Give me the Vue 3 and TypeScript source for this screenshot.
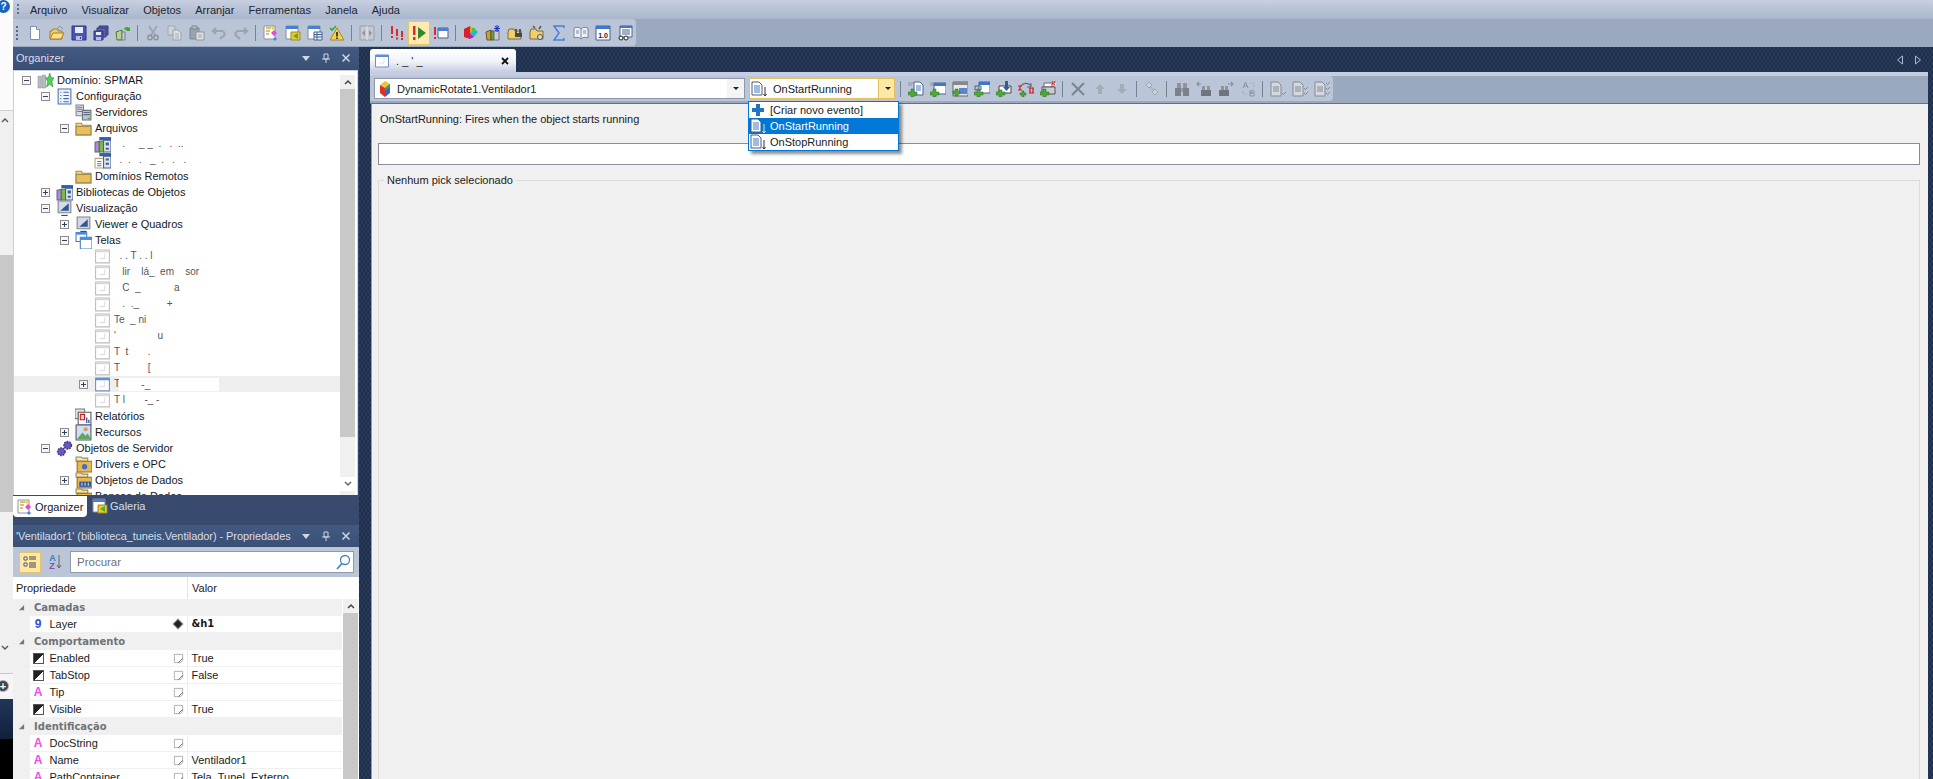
<script setup lang="ts">
interface TreeRow { label: string; level: number; icon: string; exp?: 'plus' | 'minus'; cls?: string; patch?: string }

const menus: string[] = ['Arquivo', 'Visualizar', 'Objetos', 'Arranjar', 'Ferramentas', 'Janela', 'Ajuda']

const tools1: string[] = ['new', 'open', 'save', 'saveall', 'refresh', '|', 'cut', 'copy', 'paste', 'undo', 'redo', '|',
  'organizer', 'gallery', 'propwin', 'warn', '|', 'compare', '|', 'excl3', 'run', 'exclwin', '|',
  'colors', 'libspark', 'folderbino', 'foldergear', 'sigma', 'book', 'val', 'report']

const tools2: string[] = ['|', 'adddoc', 'addwin', 'addimg', 'addwin2', 'adddown', 'addcycle', 'addprint', '|',
  'xgray', 'upgray', 'downgray', '|', 'diamonds', '|', 'bino', 'binoleft', 'binoright', 'replace', '|',
  'check1', 'check2', 'check3']

const tree: TreeRow[] = [
  { label: 'Domínio: SPMAR', level: 0, icon: 'domain', exp: 'minus' },
  { label: 'Configuração', level: 1, icon: 'list', exp: 'minus' },
  { label: 'Servidores', level: 2, icon: 'servers' },
  { label: 'Arquivos', level: 2, icon: 'folder', exp: 'minus' },
  { label: '   .     _ _  .   .  ..', level: 3, icon: 'lib', cls: 'mask' },
  { label: '  .  .   .   _  .   .   .', level: 3, icon: 'filetable', cls: 'mask' },
  { label: 'Domínios Remotos', level: 2, icon: 'folder' },
  { label: 'Bibliotecas de Objetos', level: 1, icon: 'lib', exp: 'plus' },
  { label: 'Visualização', level: 1, icon: 'monitor', exp: 'minus' },
  { label: 'Viewer e Quadros', level: 2, icon: 'monitor', exp: 'plus' },
  { label: 'Telas', level: 2, icon: 'windows', exp: 'minus' },
  { label: '  . . T . . l', level: 3, icon: 'wingray', cls: 'mask' },
  { label: '   lir    lá_  em    sor', level: 3, icon: 'wingray', cls: 'mask' },
  { label: '   C  _            a', level: 3, icon: 'wingray', cls: 'mask' },
  { label: '   .  ._          +', level: 3, icon: 'wingray', cls: 'mask' },
  { label: 'Te  _ ni', level: 3, icon: 'wingray', cls: 'mask' },
  { label: "'               u", level: 3, icon: 'wingray', cls: 'mask' },
  { label: 'T  t       .', level: 3, icon: 'wingray', cls: 'mask' },
  { label: 'T          [', level: 3, icon: 'wingray', cls: 'mask' },
  { label: 'T', level: 3, icon: 'winblue', exp: 'plus', cls: 'hover mask', patch: '        -_' },
  { label: 'T l       -_ -', level: 3, icon: 'wingray', cls: 'mask' },
  { label: 'Relatórios', level: 2, icon: 'reportdoc' },
  { label: 'Recursos', level: 2, icon: 'picture', exp: 'plus' },
  { label: 'Objetos de Servidor', level: 1, icon: 'gears', exp: 'minus' },
  { label: 'Drivers e OPC', level: 2, icon: 'folderblue' },
  { label: 'Objetos de Dados', level: 2, icon: 'folderdata', exp: 'plus' },
  { label: 'Bancos de Dados', level: 2, icon: 'folderblue' }
]

interface PropRow { group?: string; name?: string; kind?: 'nine' | 'bool' | 'text'; value?: string; strong?: boolean }
const props: PropRow[] = [
  { group: 'Camadas' },
  { name: 'Layer', kind: 'nine', value: '&h1', strong: true },
  { group: 'Comportamento' },
  { name: 'Enabled', kind: 'bool', value: 'True' },
  { name: 'TabStop', kind: 'bool', value: 'False' },
  { name: 'Tip', kind: 'text', value: '' },
  { name: 'Visible', kind: 'bool', value: 'True' },
  { group: 'Identificação' },
  { name: 'DocString', kind: 'text', value: '' },
  { name: 'Name', kind: 'text', value: 'Ventilador1' },
  { name: 'PathContainer', kind: 'text', value: 'Tela_Tunel_Externo' }
]
</script>

<template>
  <div class="app">
    <svg class="sprite" aria-hidden="true">
      <defs>
        <symbol id="new" viewBox="0 0 16 16"><path d="M3.500 1.500h6l3 3v10h-9z" fill="#fff" stroke="#7d8fb0"/><path d="M9.500 1.500v3h3" fill="#dfe6f2" stroke="#7d8fb0"/></symbol>
        <symbol id="open" viewBox="0 0 16 16"><path d="M1 6h2l1-2h5v2h4v8H1z" fill="#f0cd6e" stroke="#a67c2a"/><path d="M1 14l3-6h11l-3 6z" fill="#ffe08a" stroke="#a67c2a"/><path d="M9 3c1-2 3-2 4 0l1 1" fill="none" stroke="#7f8aa0"/></symbol>
        <symbol id="save" viewBox="0 0 16 16"><path d="M1 1h14v14H1z" fill="#4a55b5" stroke="#2e3680"/><path d="M4 2h8v6H4z" fill="#e8ecf8"/><path d="M5 11h6v4H5z" fill="#b8bfd8"/><path d="M9 12h1v2H9z" fill="#2e3680"/></symbol>
        <symbol id="saveall" viewBox="0 0 16 16"><path d="M6 1h9v9H6z" fill="#5b62a8" stroke="#33397a"/><path d="M4 3h9v9H4z" fill="#5b62a8" stroke="#33397a"/><path d="M1 6h9v9H1z" fill="#4a55b5" stroke="#2e3680"/><path d="M3 7h5v3H3z" fill="#e8ecf8"/><path d="M3 12h5v3H3z" fill="#b8bfd8"/></symbol>
        <symbol id="refresh" viewBox="0 0 16 16"><path d="M1 7l6-2v10H2z" fill="#8fb35a" stroke="#5c7a37"/><path d="M3 7v7M5 6v8" stroke="#e3edd0"/><path d="M7 7h3v8H7z" fill="#c8ccd4" stroke="#7b8090"/><path d="M9 4a3 3 0 0 1 5-1l1-1v4h-4l1-1a2 2 0 0 0-2 0z" fill="#3fa535"/></symbol>
        <symbol id="cut" viewBox="0 0 16 16"><path d="M4 1l6 9M12 1l-6 9" stroke="#9aa2ae" stroke-width="1.600" fill="none"/><circle cx="5" cy="12.500" r="2.200" fill="none" stroke="#8b929e" stroke-width="1.400"/><circle cx="11" cy="12.500" r="2.200" fill="none" stroke="#8b929e" stroke-width="1.400"/></symbol>
        <symbol id="copy" viewBox="0 0 16 16"><path d="M1 1h7v9H1z" fill="#d0d4da" stroke="#a0a6b0"/><path d="M6 5h5l3 3v7H6z" fill="#dde0e5" stroke="#98a0aa"/><path d="M8 9h4M8 11h4M8 13h4" stroke="#a8aeb8"/></symbol>
        <symbol id="paste" viewBox="0 0 16 16"><path d="M1 3h9v11H1z" fill="#9da3ac" stroke="#7e848e"/><path d="M3 1h5v3H3z" fill="#bcc1c8" stroke="#7e848e"/><path d="M7 7h8v8H7z" fill="#dfe2e6" stroke="#8d939c"/><path d="M9 10h4M9 12h4" stroke="#a0a6ae"/></symbol>
        <symbol id="undo" viewBox="0 0 16 16"><path d="M5 3L2 6l3 3M3 6h7a3 3 0 0 1 1 6l-2 2" fill="none" stroke="#9ca4b0" stroke-width="2.200"/></symbol>
        <symbol id="redo" viewBox="0 0 16 16"><path d="M11 3l3 3-3 3M13 6H6a3 3 0 0 0-1 6l2 2" fill="none" stroke="#9ca4b0" stroke-width="2.200"/></symbol>
        <symbol id="organizer" viewBox="0 0 16 16"><path d="M1 1h11v13H1z" fill="#fff" stroke="#8a93a6"/><path d="M3 3h5M3 6h4M3 9h3" stroke="#d8a93a" stroke-width="1.500"/><path d="M11 5l3 3-3 3-3-3z" fill="#e24ad8"/><path d="M12 12l2 2-2 2-2-2z" fill="#4b86e0"/><path d="M10 1l2 2-2 2-2-2z" fill="#f0d040"/></symbol>
        <symbol id="gallery" viewBox="0 0 16 16"><path d="M1 1h12v13H1z" fill="#fff" stroke="#7f8ba0"/><path d="M1 1h12v3H1z" fill="#4d7fd0"/><path d="M6 7h9v8H6z" fill="#e8c93a" stroke="#a08a20"/><path d="M13 8l-5 3 5 3z" fill="#55b02e"/></symbol>
        <symbol id="propwin" viewBox="0 0 16 16"><path d="M1 1h12v13H1z" fill="#fff" stroke="#7f8ba0"/><path d="M1 1h12v3H1z" fill="#4d7fd0"/><path d="M7 7h8v8H7z" fill="#eef1f8" stroke="#44618f"/><path d="M7 9.500h8M7 12h8M10 7v8" stroke="#44618f"/></symbol>
        <symbol id="warn" viewBox="0 0 16 16"><path d="M8 3l7 12H1z" fill="#f6d24a" stroke="#a6862a"/><path d="M7.200 7h1.600v4.500H7.200zM7.200 12.500h1.600V14H7.200z" fill="#222"/><path d="M1 3l2 2 4-4" fill="none" stroke="#3aa53a" stroke-width="1.600"/></symbol>
        <symbol id="compare" viewBox="0 0 16 16"><path d="M1 1h14v14H1z" fill="#c5c9d0" stroke="#9a9fa8"/><path d="M8 1v14" stroke="#e8eaee"/><path d="M3 8l3-3v6zM13 8l-3-3v6z" fill="#8f949c"/></symbol>
        <symbol id="excl3" viewBox="0 0 16 16"><path d="M2 1h2v8H2zM2 11h2v2H2zM7 4h2v7H7zM7 12.500h2v2H7zM12 6h2v6h-2zM12 13h2v2h-2z" fill="#dd2a2a"/></symbol>
        <symbol id="run" viewBox="0 0 16 16"><path d="M2 1h2.500v9H2zM2 12h2.500v3H2z" fill="#dd2a2a"/><path d="M7 2l8 6-8 6z" fill="#2f8a2f"/></symbol>
        <symbol id="exclwin" viewBox="0 0 16 16"><path d="M1 2h2v8H1zM1 12h2v2H1z" fill="#dd2a2a"/><path d="M5 3h10v10H5z" fill="#fff" stroke="#44618f"/><path d="M5 3h10v3H5z" fill="#4d7fd0"/></symbol>
        <symbol id="colors" viewBox="0 0 16 16"><path d="M1 4l6-3v13l-6-2z" fill="#d81f2a"/><path d="M7 1l5 3-5 4z" fill="#f0a020"/><path d="M7 8l5-4 3 3-4 5z" fill="#1fc0c0"/><path d="M7 8l4 4-4 2z" fill="#c020c0"/><path d="M9 3h3v3H9z" fill="#50c040"/></symbol>
        <symbol id="libspark" viewBox="0 0 16 16"><path d="M1 7l5-2v10H2z" fill="#c8a03a" stroke="#6a5520"/><path d="M6 6h3v9H6z" fill="#70a040" stroke="#43602a"/><path d="M9 6h5v9H9z" fill="#c9cdd4" stroke="#6f7482"/><path d="M12 0v7M9 3.500h6M10 1l4 5M14 1l-4 5" stroke="#1c2fd0"/></symbol>
        <symbol id="folderbino" viewBox="0 0 16 16"><path d="M1 7l1-3h5l1 2h6v8H1z" fill="#f0cd6e" stroke="#7f6a30"/><path d="M8 4h2v5H8zM12 4h2v5h-2z" fill="#555"/><path d="M8 8h3v4H8zM11 8h4v4h-4z" fill="#44484f"/></symbol>
        <symbol id="foldergear" viewBox="0 0 16 16"><path d="M1 7l1-3h5l1 2h6v8H1z" fill="#f0cd6e" stroke="#7f6a30"/><circle cx="11" cy="12" r="2.500" fill="#ddd" stroke="#555"/><path d="M4 1l2 2M12 1l-2 3" stroke="#555" stroke-width="1.400"/></symbol>
        <symbol id="sigma" viewBox="0 0 16 16"><path d="M13 3V1H3l5 7-5 7h10v-2" fill="none" stroke="#4a7fdc" stroke-width="1.500"/></symbol>
        <symbol id="book" viewBox="0 0 16 16"><path d="M1 3c3-1 5-1 7 1 2-2 4-2 7-1v10c-3-1-5-1-7 1-2-2-4-2-7-1z" fill="#eef0f4" stroke="#7e8490"/><path d="M8 4v10" stroke="#7e8490"/><path d="M3 6h3M3 8h3M10 6h3M10 8h3" stroke="#5f8fd0"/></symbol>
        <symbol id="val" viewBox="0 0 16 16"><path d="M1 1h14v14H1z" fill="#fff" stroke="#46608c"/><path d="M1 1h14v3H1z" fill="#3f77cf"/><text x="8" y="13" font-size="7" font-weight="700" text-anchor="middle" fill="#223" font-family="Liberation Sans">1.0</text></symbol>
        <symbol id="report" viewBox="0 0 16 16"><path d="M3 1h12v11H3z" fill="#fff" stroke="#46608c"/><path d="M3 1h12v2H3z" fill="#3f77cf"/><path d="M5 5h8M5 7h8M5 9h8" stroke="#46608c"/><circle cx="4" cy="13" r="2" fill="#fff" stroke="#222"/><circle cx="9" cy="13" r="2" fill="#fff" stroke="#222"/></symbol>

        <symbol id="adddoc" viewBox="0 0 16 16"><path d="M0 2h5M0 4h4" stroke="#8a93a6"/><path d="M6 1h6l3 3v10H6z" fill="#fff" stroke="#46608c"/><path d="M8 5h5M8 7h5M8 9h5" stroke="#3f77cf"/><path d="M3 8h3v3h3v3H6v2H3v-2H0v-3h3z" fill="#4fa83d" stroke="#2d6b23" stroke-width=".5"/></symbol>
        <symbol id="addwin" viewBox="0 0 16 16"><path d="M0 2h5M0 4h4" stroke="#8a93a6"/><path d="M4 2h12v11H4z" fill="#fff" stroke="#46608c"/><path d="M4 2h12v3H4z" fill="#3f77cf"/><path d="M3 8h3v3h3v3H6v2H3v-2H0v-3h3z" fill="#4fa83d" stroke="#2d6b23" stroke-width=".5"/></symbol>
        <symbol id="addimg" viewBox="0 0 16 16"><path d="M1 1h15v14H1z" fill="#e8e8e8" stroke="#666"/><path d="M1 1h15v3H1z" fill="#888"/><path d="M7 7h8v6H7z" fill="#5a86d0"/><path d="M3 8h3v2h2v3H6v2H3v-2H1v-3h2z" fill="#4fa83d" stroke="#2d6b23" stroke-width=".5"/></symbol>
        <symbol id="addwin2" viewBox="0 0 16 16"><path d="M5 1h11v11H5z" fill="#fff" stroke="#46608c"/><path d="M5 1h11v3H5z" fill="#3f77cf"/><path d="M1 5h6v4H1z" fill="none" stroke="#46608c"/><path d="M3 8h3v3h3v3H6v2H3v-2H0v-3h3z" fill="#4fa83d" stroke="#2d6b23" stroke-width=".5"/></symbol>
        <symbol id="adddown" viewBox="0 0 16 16"><path d="M3 5h12v7H3z" fill="#fff" stroke="#444"/><path d="M9 0h3v6h2l-3.500 4L7 6h2z" fill="#2a5f9e"/><path d="M3 9h3v2h3v3H6v2H3v-2H0v-3h3z" fill="#4fa83d" stroke="#2d6b23" stroke-width=".5"/></symbol>
        <symbol id="addcycle" viewBox="0 0 16 16"><path d="M3 5a6 6 0 0 1 10 0" fill="none" stroke="#666" stroke-width="1.300"/><path d="M13 2v4h-4" fill="none" stroke="#666"/><path d="M0 5h4M2 5v4M0 9h4M11 7h5M12 7v5M15 7v5M11 12h5" stroke="#c81818" stroke-width="1.200"/><path d="M4 10h2v2h2v2H6v2H4v-2H2v-2h2z" fill="#4fa83d" stroke="#2d6b23" stroke-width=".5"/></symbol>
        <symbol id="addprint" viewBox="0 0 16 16"><path d="M4 2h8v4H4z" fill="#fff" stroke="#666"/><path d="M2 6h13v7H2z" fill="#c8ccd4" stroke="#555"/><path d="M11 0h5v4h-5z" fill="#fff"/><path d="M12 0v4M12 0h3v2h-3l3 2" stroke="#c81818" fill="none"/><path d="M3 8h3v3h3v3H6v2H3v-2H0v-3h3z" fill="#4fa83d" stroke="#2d6b23" stroke-width=".5"/></symbol>
        <symbol id="xgray" viewBox="0 0 16 16"><path d="M2 2l12 12M14 2L2 14" stroke="#7c8290" stroke-width="2"/></symbol>
        <symbol id="upgray" viewBox="0 0 16 16"><path d="M8 3l5 5h-3v5H6V8H3z" fill="#a6acb6"/></symbol>
        <symbol id="downgray" viewBox="0 0 16 16"><path d="M8 13L3 8h3V3h4v5h3z" fill="#a6acb6"/></symbol>
        <symbol id="diamonds" viewBox="0 0 16 16"><path d="M5 1l3 3-3 3-3-3zM11 8l3 3-3 3-3-3z" fill="#cdd2da" stroke="#a0a6b0"/><path d="M6 6l4 3" stroke="#a0a6b0"/></symbol>
        <symbol id="bino" viewBox="0 0 16 16"><path d="M3 2h4v5H3zM9 2h4v5H9z" fill="#8f959f"/><path d="M1 7h6v8H1zM9 7h6v8H9z" fill="#7c828c"/><path d="M7 7h2v4H7z" fill="#9aa0aa"/></symbol>
        <symbol id="binoleft" viewBox="0 0 16 16"><path d="M5 3H1M3 1L1 3l2 2" fill="none" stroke="#8a909a" stroke-width="1.200"/><path d="M6 5h3v4H6zM11 5h3v4h-3z" fill="#8f959f"/><path d="M5 9h5v6H5zM10 9h5v6h-5z" fill="#6f7580"/></symbol>
        <symbol id="binoright" viewBox="0 0 16 16"><path d="M10 3h5M13 1l2 2-2 2" fill="none" stroke="#8a909a" stroke-width="1.200"/><path d="M3 5h3v4H3zM7 5h3v4H7z" fill="#8f959f"/><path d="M1 9h5v6H1zM6 9h5v6H6z" fill="#6f7580"/></symbol>
        <symbol id="replace" viewBox="0 0 16 16"><path d="M3 7l2.500-6L8 7M4 5h3M10 9v6h3a1.500 1.500 0 0 0 0-3h-3m0 0h2.500a1.500 1.500 0 0 0 0-3z" fill="none" stroke="#8a909a"/><path d="M10 2h4v4M3 10v3h4" fill="none" stroke="#a6acb6" stroke-dasharray="2 1"/></symbol>
        <symbol id="check1" viewBox="0 0 16 16"><path d="M1 1h7l3 3v11H1z" fill="#d5d8de" stroke="#858b96"/><path d="M3 6h6M3 8h6M3 10h6" stroke="#858b96"/><path d="M12 12l1.500 1.500L16 11" fill="none" stroke="#858b96"/></symbol>
        <symbol id="check2" viewBox="0 0 16 16"><path d="M1 1h7l3 3v11H1z" fill="#d5d8de" stroke="#858b96"/><path d="M3 6h6M3 8h6M3 10h6" stroke="#858b96"/><path d="M12 7l1.500 1.500L16 6M12 12l1.500 1.500L16 11" fill="none" stroke="#858b96"/></symbol>
        <symbol id="check3" viewBox="0 0 16 16"><path d="M1 1h7l3 3v11H1z" fill="#d5d8de" stroke="#858b96"/><path d="M3 6h6M3 8h6M3 10h6" stroke="#858b96"/><path d="M12 2l1.500 1.500L16 1M12 7l1.500 1.500L16 6M12 12l1.500 1.500L16 11" fill="none" stroke="#858b96"/></symbol>

        <symbol id="domain" viewBox="0 0 16 16"><path d="M1 4h3v11H1zM5 3h3v12H5z" fill="#b9bcc2" stroke="#8c9098" stroke-width=".6"/><path d="M12 1l1.500 4.500H16L14 9l1 5-3-2.500L9 14l1-5-2-3.500h2.500z" fill="#52d05a" stroke="#2f9a38" stroke-width=".6"/></symbol>
        <symbol id="list" viewBox="0 0 16 16"><path d="M2 1h12v14H2z" fill="#eef3fb" stroke="#4b6fb0"/><path d="M4 4h1M4 7h1M4 10h1M4 13h1M7 4h5M7 7h5M7 10h5M7 13h5" stroke="#3f68b8"/></symbol>
        <symbol id="servers" viewBox="0 0 16 16"><path d="M1 1h7v10H1z" fill="#d9dde3" stroke="#7f8692"/><path d="M2 3h5M2 5h5M2 7h5" stroke="#6f7c90"/><path d="M7 6h8v9H7z" fill="#c0c5cd" stroke="#6a717c"/><path d="M8 8h6M8 10h6" stroke="#5f6a7a"/><path d="M12 13h2v1h-2z" fill="#3fa535"/></symbol>
        <symbol id="folder" viewBox="0 0 16 16"><path d="M1 3h5l1 2h8v9H1z" fill="#f4d88a" stroke="#a58a4a"/><path d="M1 6h14v8H1z" fill="#e9be5d" stroke="#a58a4a"/></symbol>
        <symbol id="lib" viewBox="0 0 16 16"><path d="M5 1h11v3H5z" fill="#2f5fb0"/><path d="M1 6l4-1v10H1z" fill="#a88fd0" stroke="#6a5a90"/><path d="M5 5h4v10H5z" fill="#7fb84a" stroke="#4d7a2a"/><path d="M9 4h7v11H9z" fill="#dfe5f0" stroke="#41608f"/><path d="M11 6h3v3h-3zM11 11h3v2h-3z" fill="#41608f"/></symbol>
        <symbol id="filetable" viewBox="0 0 16 16"><path d="M5 1h11v3H5z" fill="#2f5fb0"/><path d="M1 6h8v9H1z" fill="#fff" stroke="#b9a67a"/><path d="M3 9h4M3 11h4M3 13h4" stroke="#4b78c8"/><path d="M9 4h7v11H9z" fill="#dfe5f0" stroke="#41608f"/><path d="M11 6h3v2h-3zM11 10h3v2h-3z" fill="#41608f"/></symbol>
        <symbol id="monitor" viewBox="0 0 16 16"><path d="M2 1h12v11H2z" fill="#d4d8de" stroke="#7e848e"/><path d="M4 3h8v7H4z" fill="#cfdcf0"/><path d="M4 10l8-7v7z" fill="#34558f"/><path d="M5 14h6v1H5z" fill="#3d3d3d"/></symbol>
        <symbol id="windows" viewBox="0 0 16 16"><path d="M1 0h10v9H1z" fill="#fff" stroke="#4c78c0"/><path d="M1 0h10v2.500H1z" fill="#4c88e0"/><path d="M5 5h11v11H5z" fill="#fff" stroke="#4c78c0"/><path d="M5 5h11v2.500H5z" fill="#4c88e0"/></symbol>
        <symbol id="wingray" viewBox="0 0 16 16"><path d="M1.500 2h13v12h-13z" fill="#fff" stroke="#bdbdbd"/><path d="M1.500 2h13v2h-13z" fill="#d8d8d8"/><path d="M10 5v5H5" fill="none" stroke="#e2e2e2"/></symbol>
        <symbol id="winblue" viewBox="0 0 16 16"><path d="M1.500 2h13v12h-13z" fill="#fff" stroke="#6b8fc8"/><path d="M1.500 2h13v2h-13z" fill="#5a8fe0"/><path d="M10 5v5H5" fill="none" stroke="#e2e2e2"/></symbol>
        <symbol id="reportdoc" viewBox="0 0 16 16"><path d="M0 1h9v9H0z" fill="#e2e4e8" stroke="#777"/><path d="M3 4h12v12H3z" fill="#fff" stroke="#555"/><path d="M5 6h4v5H5z" fill="#f4d0d0" stroke="#c81818"/><path d="M11 9v5M13 11v3" stroke="#3f68b8" stroke-width="1.400"/></symbol>
        <symbol id="picture" viewBox="0 0 16 16"><path d="M1 1h14v14H1z" fill="#cfe0f5" stroke="#555"/><path d="M2 14l5-6 3 3 2-2 3 5z" fill="#5da85a"/><circle cx="10" cy="5" r="2" fill="#d89a70"/></symbol>
        <symbol id="gears" viewBox="0 0 16 16"><circle cx="11" cy="5" r="3.500" fill="#6a5ab8" stroke="#463a8a" stroke-width="1.500" stroke-dasharray="1.500 1"/><circle cx="5" cy="11" r="3.500" fill="#6a5ab8" stroke="#463a8a" stroke-width="1.500" stroke-dasharray="1.500 1"/></symbol>
        <symbol id="folderblue" viewBox="0 0 16 16"><path d="M1 1h5l1 1h5v3H1z" fill="#f4e4b0" stroke="#9a8a50"/><path d="M2 5h14v10H2z" fill="#e8b94a" stroke="#8a6e2a"/><circle cx="9" cy="10" r="2.500" fill="#3a6ed8"/></symbol>
        <symbol id="folderdata" viewBox="0 0 16 16"><path d="M1 1h5l1 1h5v3H1z" fill="#f4e4b0" stroke="#9a8a50"/><path d="M2 5h14v10H2z" fill="#e8b94a" stroke="#8a6e2a"/><path d="M4 9h11v5H4z" fill="#2a58b8"/><path d="M6 10h1v3H6zM9 10h1v3H9zM12 10h1v3h-1z" fill="#ffe070"/></symbol>

        <symbol id="evt" viewBox="0 0 16 16"><path d="M1 1h7l3 3v10H1z" fill="#fff" stroke="#49597a"/><path d="M3 5h6M3 7h6M3 9h6M3 11h6" stroke="#3f78c8"/><path d="M14 6v9M12.500 13l1.500 2 1.500-2" fill="none" stroke="#333"/></symbol>
        <symbol id="evt2" viewBox="0 0 16 16"><path d="M1 1h7l3 3v10H1z" fill="#fff" stroke="#49597a"/><path d="M3 5h6M3 7h6M3 9h6M3 11h6" stroke="#3f78c8"/><path d="M14 6v9M12.500 13l1.500 2 1.500-2" fill="none" stroke="#ddd"/></symbol>
        <symbol id="cube" viewBox="0 0 16 16"><path d="M8 0l5 3-5 4-5-3z" fill="#f2c232"/><path d="M3 4l5 3v9L3 12z" fill="#d6332a"/><path d="M13 3v9l-5 4V7z" fill="#3a62c8"/><path d="M8 7l5-4v3l-5 4z" fill="#2ea84a"/></symbol>
        <symbol id="mark" viewBox="0 0 16 16"><path d="M2 2h12v9l-3 3H2z" fill="#fff" stroke="#909090"/><path d="M14 8l-6 6" stroke="#555" stroke-width="1.300"/></symbol>
      </defs>
    </svg>

    <aside class="strip">
      <div class="s-top"><span class="help">?</span></div>
      <div class="s-a"><svg class="chev" viewBox="0 0 8 6"><path d="M1 5l3-3 3 3" fill="none" stroke="#555" stroke-width="1.400"/></svg></div>
      <div class="s-b"></div>
      <div class="s-c"><svg class="chev" viewBox="0 0 8 6"><path d="M1 1l3 3 3-3" fill="none" stroke="#555" stroke-width="1.400"/></svg></div>
      <div class="s-d"><span class="plus-c">+</span></div>
      <div class="s-e"></div>
      <div class="s-f"></div>
    </aside>

    <div class="main">
      <nav class="menubar">
        <i class="grip"></i>
        <span v-for="m in menus" :key="m" class="menu">{{ m }}</span>
      </nav>

      <div class="band">
        <div class="toolbar top">
          <i class="grip2"></i>
          <template v-for="(t, i) in tools1" :key="i">
            <i v-if="t === '|'" class="sep"></i>
            <span v-else class="tb" :class="{ on: t === 'run' }"><svg class="ic"><use :href="'#' + t" /></svg></span>
          </template>
        </div>
      </div>

      <div class="work">
        <section class="dock">
          <header class="title">
            <span>Organizer</span>
            <span class="title-btns">
              <svg viewBox="0 0 10 10"><path d="M1 3h8L5 8z" fill="#cfd6e4"/></svg>
              <svg viewBox="0 0 10 10"><path d="M3 1h4v5H3zM1 6h8M5 6v4" fill="none" stroke="#cfd6e4"/></svg>
              <svg viewBox="0 0 10 10"><path d="M1.500 1.500l7 7M8.500 1.500l-7 7" stroke="#cfd6e4" stroke-width="1.500"/></svg>
            </span>
          </header>
          <div class="tree-panel">
            <div class="tree">
              <div v-for="(r, i) in tree" :key="i" class="row" :class="r.cls" :style="{ paddingLeft: 3 + r.level * 19 + 'px' }">
                <span class="exp-slot"><i v-if="r.exp" class="exp" :class="r.exp"></i></span>
                <svg class="tree-ic"><use :href="'#' + r.icon" /></svg>
                <span class="lbl">{{ r.label }}</span>
                <span v-if="r.patch" class="patch">{{ r.patch }}</span>
              </div>
            </div>
            <div class="vscroll">
              <span class="sb-btn"><svg viewBox="0 0 8 6"><path d="M1 5l3-3 3 3" fill="none" stroke="#444" stroke-width="1.500"/></svg></span>
              <span class="sb-thumb"></span>
              <span class="sb-btn low"><svg viewBox="0 0 8 6"><path d="M1 1l3 3 3-3" fill="none" stroke="#666" stroke-width="1.500"/></svg></span>
            </div>
          </div>
          <div class="dock-tabs">
            <span class="dtab active"><svg class="ic"><use href="#organizer" /></svg>Organizer</span>
            <span class="dtab"><svg class="ic"><use href="#gallery" /></svg>Galeria</span>
          </div>

          <header class="title second">
            <span class="tight">'Ventilador1' (biblioteca_tuneis.Ventilador) - Propriedades</span>
            <span class="title-btns">
              <svg viewBox="0 0 10 10"><path d="M1 3h8L5 8z" fill="#cfd6e4"/></svg>
              <svg viewBox="0 0 10 10"><path d="M3 1h4v5H3zM1 6h8M5 6v4" fill="none" stroke="#cfd6e4"/></svg>
              <svg viewBox="0 0 10 10"><path d="M1.500 1.500l7 7M8.500 1.500l-7 7" stroke="#cfd6e4" stroke-width="1.500"/></svg>
            </span>
          </header>
          <div class="prop-bar">
            <span class="sortbtn">
              <svg viewBox="0 0 16 16" width="16" height="16"><path d="M2 3h3v3H2zM2 9h3v3H2z" fill="#fff" stroke="#555"/><path d="M7 3h7M7 5h7M7 9h7M7 11h7M7 13h7" stroke="#444"/></svg>
            </span>
            <span class="azbtn"><span class="az"><b class="a">A</b><b class="z">Z</b></span><svg viewBox="0 0 6 16" width="6" height="16"><path d="M3 1v13M1 11l2 3 2-3" fill="none" stroke="#666"/></svg></span>
            <div class="search">
              <span>Procurar</span>
              <svg viewBox="0 0 16 16" width="16" height="16"><circle cx="10" cy="6" r="4.500" fill="#fff" stroke="#4b7fb8" stroke-width="1.300"/><path d="M7 9.500L2 15" stroke="#4b7fb8" stroke-width="1.800"/></svg>
            </div>
          </div>
          <div class="prop-head"><span class="ph-name">Propriedade</span><span class="ph-val">Valor</span></div>
          <div class="prop-body">
            <div class="grid">
              <template v-for="(p, i) in props" :key="i">
                <div v-if="p.group" class="grp">
                  <svg viewBox="0 0 8 8" width="7" height="7"><path d="M7 1v6H1z" fill="#777"/></svg>
                  <b>{{ p.group }}</b>
                </div>
                <div v-else class="prow">
                  <span class="gut"></span>
                  <span class="picon">
                    <b v-if="p.kind === 'nine'" class="nine">9</b>
                    <i v-else-if="p.kind === 'bool'" class="bool"></i>
                    <b v-else class="pink">A</b>
                  </span>
                  <span class="pname">{{ p.name }}</span>
                  <span class="pmark">
                    <i v-if="p.strong" class="dia"></i>
                    <svg v-else class="mk"><use href="#mark" /></svg>
                  </span>
                  <span class="pval" :class="{ strong: p.strong }">{{ p.value }}</span>
                </div>
              </template>
            </div>
            <div class="vscroll small">
              <span class="sb-btn"><svg viewBox="0 0 8 6"><path d="M1 5l3-3 3 3" fill="none" stroke="#444" stroke-width="1.500"/></svg></span>
              <span class="sb-thumb big"></span>
            </div>
          </div>
        </section>

        <section class="docs">
          <div class="tabstrip">
            <div class="dtabtop">
              <svg class="ic"><use href="#winblue" /></svg>
              <span class="masked">  . _   '  _</span>
              <svg class="close" viewBox="0 0 10 10"><path d="M2 2l6 6M8 2l-6 6" stroke="#111" stroke-width="1.800"/></svg>
            </div>
            <div class="navs">
              <svg viewBox="0 0 8 10" width="8" height="10"><path d="M6.500 1L1.500 5l5 4z" fill="none" stroke="#aeb9cd"/></svg>
              <svg viewBox="0 0 8 10" width="8" height="10"><path d="M1.500 1l5 4-5 4z" fill="none" stroke="#aeb9cd"/></svg>
            </div>
          </div>
          <div class="doc">
            <div class="doc-head">
              <div class="toolbar sub">
                <div class="combo c1">
                  <svg class="ic"><use href="#cube" /></svg>
                  <span>DynamicRotate1.Ventilador1</span>
                  <i class="drop"></i>
                </div>
                <div class="combo c2">
                  <svg class="ic"><use href="#evt" /></svg>
                  <span>OnStartRunning</span>
                  <i class="drop"></i>
                </div>
                <template v-for="(t, i) in tools2" :key="i">
                  <i v-if="t === '|'" class="sep"></i>
                  <span v-else class="tb"><svg class="ic"><use :href="'#' + t" /></svg></span>
                </template>
              </div>
            </div>
            <div class="doc-body">
              <p class="desc">OnStartRunning: Fires when the object starts running</p>
              <div class="inputbox"></div>
              <fieldset class="pick"><legend>Nenhum pick selecionado</legend></fieldset>
            </div>
            <ul class="dropdown">
              <li><svg class="plusic" viewBox="0 0 14 14"><path d="M5 1h4v4h4v4H9v4H5V9H1V5h4z" fill="#1f74c4"/></svg>[Criar novo evento]</li>
              <li class="sel"><svg class="ic"><use href="#evt2" /></svg>OnStartRunning</li>
              <li><svg class="ic"><use href="#evt" /></svg>OnStopRunning</li>
            </ul>
          </div>
        </section>
      </div>
    </div>
  </div>
</template>

<style scoped>
.app { display: flex; width: 1933px; height: 779px; overflow: hidden; font: 11px/14px "Liberation Sans", sans-serif; color: #1a1a1a; background: #1f2e4b; }
.sprite { position: absolute; width: 0; height: 0; }
.ic { width: 16px; height: 16px; flex: none; display: block; }

.strip { width: 13px; flex: none; display: flex; flex-direction: column; background: #f0f0f0; overflow: hidden; }
.s-top { height: 110px; background: #fbfbfb; border-bottom: 1px solid #d0d0d0; position: relative; }
.help { position: absolute; left: -3px; top: 0; width: 13px; height: 13px; border-radius: 50%; background: #1565c0; color: #fff; font: 700 10px/13px "Liberation Sans", sans-serif; text-align: center; }
.s-a { height: 144px; padding: 6px 0 0 1px; box-sizing: border-box; }
.chev { width: 8px; height: 6px; display: block; }
.s-b { height: 257px; background: #c8c8c8; }
.s-c { height: 162px; padding: 133px 0 0 1px; box-sizing: border-box; border-bottom: 1px solid #c8c8c8; }
.s-d { height: 25px; background: #f5f5f5; position: relative; }
.plus-c { position: absolute; left: -2px; top: 7px; width: 10px; height: 10px; border-radius: 50%; background: #444; color: #fff; font: 700 11px/10px "Liberation Sans", sans-serif; text-align: center; box-shadow: 0 0 0 1px #aaa; }
.s-e { height: 40px; background: linear-gradient(#22365a, #10203a); }
.s-f { flex: 1; background: #000; }

.main { flex: 1; min-width: 0; display: flex; flex-direction: column; }
.menubar { height: 19px; flex: none; display: flex; align-items: center; padding-left: 4px; background: linear-gradient(#c7cfe1, #aab6cb); box-sizing: border-box; }
.grip { width: 2px; height: 11px; margin-right: 4px; background: repeating-linear-gradient(#65708a 0 2px, transparent 2px 4px); }
.menu { padding: 0 7.100px; color: #1c2430; }
.menu:first-of-type { padding-left: 7px; }

.band { height: 28px; flex: none; background: #9aa9c0; }
.toolbar { display: flex; align-items: center; background: #bac6d8; box-sizing: border-box; }
.toolbar.top { width: 623px; height: 27px; border-radius: 0 4px 4px 0; padding-left: 11px; position: relative; }
.grip2 { position: absolute; left: 3px; top: 7px; width: 2px; height: 14px; background: repeating-linear-gradient(#5b6680 0 2px, transparent 2px 4px); }
.tb { width: 22px; height: 24px; flex: none; display: flex; align-items: center; justify-content: center; box-sizing: border-box; }
.tb.on { background: #ffeab0; border: 1px solid #e7c56b; }
.sep { width: 8px; height: 16px; flex: none; position: relative; }
.sep::before { content: ""; position: absolute; left: 3px; top: 0; width: 1px; height: 16px; background: #77818f; }

.work { flex: 1; min-height: 0; display: flex; }
.dock { width: 346px; flex: none; display: flex; flex-direction: column; background: #384b6e; }
.title { height: 22px; flex: none; display: flex; align-items: center; justify-content: space-between; padding: 0 8px 0 3px; color: #d8deea; background: linear-gradient(#425a83, #3a4f74); box-sizing: border-box; }
.tight { letter-spacing: -.07px; }
.title-btns { display: flex; gap: 10px; }
.title-btns svg { width: 10px; height: 10px; }
.tree-panel { height: 425px; flex: none; margin-top: 1px; background: #fff; border: 1px solid #c9d0dc; border-bottom-width: 0; display: flex; box-sizing: border-box; margin-right: 1px; }
.tree { flex: 1; min-width: 0; padding-top: 1px; overflow: hidden; }
.row { height: 16px; display: flex; align-items: center; white-space: pre; color: #14181f; }
.row.hover { background: #efefef; }
.row.mask .lbl, .row.mask .patch { color: #555; font-size: 10px; }
.exp-slot { width: 19px; height: 16px; flex: none; display: flex; align-items: center; justify-content: center; }
.exp { width: 9px; height: 9px; box-sizing: border-box; border: 1px solid #8d8d8d; position: relative; background: #f5f5f5; display: block; }
.exp::before { content: ""; position: absolute; left: 1px; top: 3px; width: 5px; height: 1px; background: #33415c; }
.exp.plus::after { content: ""; position: absolute; left: 3px; top: 1px; width: 1px; height: 5px; background: #33415c; }
.tree-ic { width: 17px; height: 17px; flex: none; margin: 0 3px 0 1px; }
.lbl { display: block; }
.patch { background: #fff; width: 100px; height: 13px; line-height: 13px; margin-left: -1px; }
.vscroll { width: 15px; flex: none; margin-right: 2px; margin-top: 4px; display: flex; flex-direction: column; background: #f0f0f0; }
.sb-btn { height: 14px; flex: none; display: flex; align-items: center; justify-content: center; }
.sb-btn svg { width: 8px; height: 6px; }
.sb-btn.low { margin-top: auto; margin-bottom: 4px; background: #fff; }
.sb-thumb { height: 348px; flex: none; background: #c8c8c8; }
.sb-thumb.big { height: auto; flex: 1; }

.dock-tabs { height: 22px; flex: none; display: flex; color: #d8deea; }
.dtab { display: flex; align-items: center; gap: 2px; padding: 0 10px 0 5px; }
.dtab.active { background: #fff; color: #14181f; border-radius: 0 0 4px 4px; padding: 0 6px 0 4px; width: 74px; box-sizing: border-box; margin-top: 1px; }
.title.second { margin-top: 8px; }
.prop-bar { height: 30px; flex: none; display: flex; align-items: center; background: #bac6d8; box-sizing: border-box; padding-left: 6px; }
.sortbtn { width: 22px; height: 21px; box-sizing: border-box; background: #ffe8a6; border: 1px solid #e6c469; display: flex; align-items: center; justify-content: center; }
.azbtn { width: 29px; display: flex; align-items: center; justify-content: center; }
.az { display: flex; flex-direction: column; font-size: 9px; line-height: 8px; }
.a { color: #3b79c9; }
.z { color: #8a4ab0; }
.search { width: 284px; height: 22px; box-sizing: border-box; background: #fff; border: 1px solid #9099aa; display: flex; align-items: center; justify-content: space-between; padding: 0 2px 0 6px; color: #6d7078; font-size: 11.500px; }
.prop-head { height: 22px; flex: none; background: #fff; display: flex; align-items: center; position: relative; }
.ph-name { margin-left: 3px; width: 172px; }
.ph-val { margin-left: 4px; }
.prop-head::after { content: ""; position: absolute; left: 174px; top: 0; bottom: 0; width: 1px; background: #e4e4e4; }
.prop-body { flex: 1; min-height: 0; display: flex; background: #fff; overflow: hidden; }
.grid { width: 329px; flex: none; }
.grp { height: 17px; display: flex; align-items: center; gap: 6px; padding-left: 5px; background: #f0f0f0; box-sizing: border-box; color: #6f7278; font-family: "DejaVu Sans", sans-serif; font-size: 10px; }
.grp svg { margin-right: 1px; }
.grp b { margin-left: 2px; }
.prow { height: 17px; display: flex; align-items: center; box-sizing: border-box; border-bottom: 1px solid #f0f0f0; }
.gut { width: 17px; height: 17px; flex: none; background: #f0f0f0; }
.picon { width: 16px; height: 16px; flex: none; display: flex; align-items: center; justify-content: center; }
.nine { color: #3550d8; font: 700 12px/14px "Liberation Sans", sans-serif; }
.pink { color: #f24ce6; font: 700 12px/14px "Liberation Sans", sans-serif; }
.bool { width: 9px; height: 9px; border: 1px solid #555; display: block; background: linear-gradient(135deg, #222 50%, #fff 50%); }
.pname { width: 120px; margin-left: 3.500px; flex: none; }
.pmark { width: 17px; flex: none; height: 16px; display: flex; align-items: center; justify-content: center; border-right: 1px solid #eee; box-sizing: content-box; }
.mk { width: 11px; height: 11px; }
.dia { width: 6px; height: 6px; background: #222; transform: rotate(45deg); box-shadow: 0 0 0 1px #999; display: block; }
.pval { margin-left: 4px; }
.pval.strong { font: 700 10px/14px "DejaVu Sans", sans-serif; }
.vscroll.small { margin: 0 0 0 1px; width: 15px; }

.docs { flex: 1; min-width: 0; display: flex; flex-direction: column; background: repeating-conic-gradient(#283a5a 0 25%, #1f2e4b 0 50%) 0 0 / 4px 6px; padding: 0 5px 0 11px; }
.tabstrip { height: 25px; flex: none; display: flex; align-items: flex-end; justify-content: space-between; }
.dtabtop { width: 146px; height: 23px; box-sizing: border-box; display: flex; align-items: center; padding: 0 6px 0 4px; border-radius: 3px 3px 0 0; background: linear-gradient(#fff, #f0f2f8 55%, #c5cde2); }
.masked { flex: 1; margin-left: 3px; white-space: pre; }
.close { width: 10px; height: 10px; flex: none; }
.navs { display: flex; gap: 10px; align-self: center; margin-right: 6px; margin-top: 0; }
.doc { flex: 1; min-height: 0; display: flex; flex-direction: column; position: relative; }
.doc-head { height: 32px; flex: none; box-sizing: border-box; padding-top: 4px; background: linear-gradient(#c5cde2 4px, #9aa9c0 4px); border-bottom: 1px solid #6f6f6f; }
.toolbar.sub { width: 963px; height: 25px; padding-left: 4px; border-radius: 0 4px 4px 0; }
.combo { height: 21px; flex: none; box-sizing: border-box; background: #fff; display: flex; align-items: center; position: relative; }
.c1 { width: 371px; margin-right: 4px; border: 1px solid #8e97ac; padding-left: 2px; }
.c2 { width: 146px; margin-right: 2px; border: 1px solid #e3bf62; padding-left: 1px; }
.c1 .ic { margin: 0 4px 0 0; }
.c2 .ic { margin: 0 6px 0 0; }
.drop { position: absolute; right: 0; top: 0; bottom: 0; width: 17px; }
.drop::before { content: ""; position: absolute; left: 6px; top: 8px; border: 3px solid transparent; border-top: 3px solid #222; }
.c2 .drop { width: 15px; background: #ffe8a6; border-left: 1px solid #e3bf62; }
.c1 .drop { background: #f4f4f4; }
.doc-body { flex: 1; min-height: 0; display: flex; flex-direction: column; padding: 8px 8px 0 6px; margin-left: 1px; background: #f0f0f0; border-left: 1px solid #9a9a9a; }
.desc { margin: 0 0 0 2px; height: 14px; }
.inputbox { height: 22px; flex: none; margin-top: 17px; box-sizing: border-box; background: #fff; border: 1px solid #8a8c9c; }
.pick { flex: 1; min-height: 0; margin: 8px 0 0; padding: 0; border: 1px solid #dcdcdc; border-bottom: 0; }
.pick legend { margin-left: 5px; padding: 0 3px; }
.dropdown { position: absolute; left: 378px; top: 29px; width: 151px; margin: 0; padding: 0; list-style: none; background: #fff; border: 1px solid #0078d7; box-sizing: border-box; box-shadow: 3px 3px 3px rgba(0, 0, 0, .45); }
.dropdown li { height: 16px; display: flex; align-items: center; gap: 4px; }
.dropdown li.sel { background: #0078d7; color: #fff; }
.plusic { width: 14px; height: 14px; margin-left: 2px; margin-right: 1px; }
.dropdown li .ic { margin-left: 1px; }
</style>

<style>
html, body { margin: 0; padding: 0; background: #1f2e4b; }
</style>
